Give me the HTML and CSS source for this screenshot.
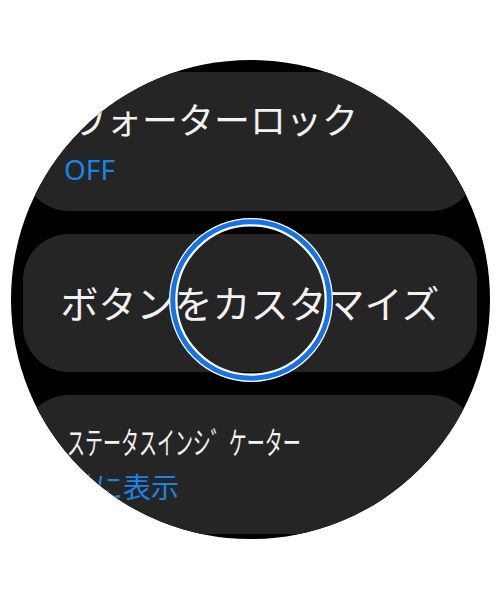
FILE: index.html
```html
<!DOCTYPE html>
<html lang="ja">
<head>
<meta charset="utf-8">
<title>設定</title>
<link rel="stylesheet" href="styles.css">
</head>
<body>
<div class="page">
  <div class="screen">
    <div class="list">
      <div class="card card--two card--lock">
        <div class="title">ウォーターロック</div>
        <div class="sub">OFF</div>
      </div>
      <div class="card card--center">
        <div class="title title--big">ボタンをカスタマイズ</div>
      </div>
      <div class="card card--two card--status">
        <div class="title"><span class="narrow">ステータスインシ゛ケーター</span></div>
        <div class="sub">常に表示</div>
      </div>
    </div>
    <!-- focus ring over the selected row -->
    <svg class="focus-ring" width="170" height="170" viewBox="0 0 170 170">
      <circle cx="85" cy="85" r="77.75" fill="none" stroke="#ffffff" stroke-width="8.5"/>
      <circle cx="85" cy="85" r="78.25" fill="none" stroke="#1473e6" stroke-width="5"/>
    </svg>
  </div>
</div>
</body>
</html>
```

FILE: styles.css
```css
html, body {
  margin: 0;
  background: #ffffff;
}

.page {
  width: 500px;
  height: 600px;
  padding: 60px 0 0 11px;
  box-sizing: border-box;
  font-family: "Noto Sans", "Noto Sans CJK JP", sans-serif;
}

/* round watch display */
.screen {
  position: relative;
  width: 479px;
  height: 479px;
  border-radius: 50%;
  overflow: hidden;
  background: #000000;
}

.list {
  display: flex;
  flex-direction: column;
  gap: 23px;
  padding: 12px 13px 0 12px;
}

.card {
  flex: none;
  height: 138.5px;
  box-sizing: border-box;
  background: #252525;
  border-radius: 46px;
}

.title {
  color: #f2f2f2;
  white-space: nowrap;
}

.sub {
  white-space: nowrap;
  color: #1a84e6;
}

.card--lock {
  padding: 27px 0 0 47px;
}

.card--lock .title {
  font-size: 36px;
  line-height: 44px;
}

.card--lock .sub {
  font-size: 28px;
  line-height: 52px;
  margin-left: -6px;
}

.card--center {
  display: flex;
  align-items: center;
  justify-content: center;
}

.title--big {
  font-size: 38px;
  line-height: 1;
}

.card--status {
  padding: 27px 0 0 44px;
}

.card--status .title {
  font-size: 31px;
  line-height: 40px;
}

/* condensed system title */
.narrow {
  display: inline-block;
  transform: scaleX(0.58);
  transform-origin: left center;
}

.card--status .sub {
  font-size: 28px;
  line-height: 50px;
}

.focus-ring {
  position: absolute;
  left: 50%;
  top: 50%;
  transform: translate(-50%, -50%);
}
```
